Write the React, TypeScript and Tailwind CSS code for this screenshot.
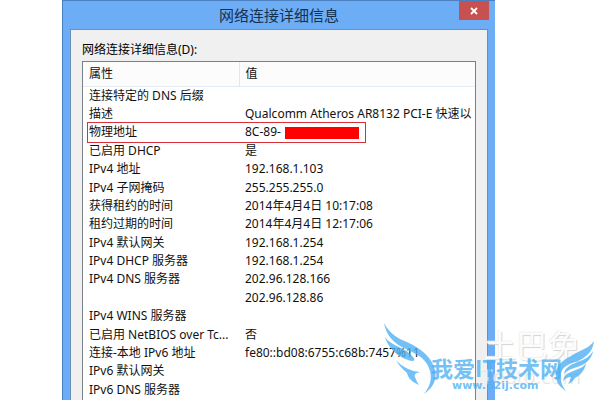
import * as React from "react";

type Detail = {
  name: string;
  value: string;
  masked?: boolean;
};

const details: Detail[] = [
  { name: "连接特定的 DNS 后缀", value: "" },
  { name: "描述", value: "Qualcomm Atheros AR8132 PCI-E 快速以" },
  { name: "物理地址", value: "8C-89-", masked: true },
  { name: "已启用 DHCP", value: "是" },
  { name: "IPv4 地址", value: "192.168.1.103" },
  { name: "IPv4 子网掩码", value: "255.255.255.0" },
  { name: "获得租约的时间", value: "2014年4月4日 10:17:08" },
  { name: "租约过期的时间", value: "2014年4月4日 12:17:06" },
  { name: "IPv4 默认网关", value: "192.168.1.254" },
  { name: "IPv4 DHCP 服务器", value: "192.168.1.254" },
  { name: "IPv4 DNS 服务器", value: "202.96.128.166" },
  { name: "", value: "202.96.128.86" },
  { name: "IPv4 WINS 服务器", value: "" },
  { name: "已启用 NetBIOS over Tc...", value: "否" },
  { name: "连接-本地 IPv6 地址", value: "fe80::bd08:6755:c68b:7457%11" },
  { name: "IPv6 默认网关", value: "" },
  { name: "IPv6 DNS 服务器", value: "" },
];

function TitleBar() {
  return (
    <header className="relative flex h-[29px] items-center justify-center border-t border-[#4a7fc0]">
      <h1 className="text-[15px] leading-5 text-[#16304f]">网络连接详细信息</h1>
      <button
        type="button"
        aria-label="关闭"
        className="absolute top-0 right-1.5 flex h-[19px] w-[30px] items-center justify-center bg-[#c75050]"
      >
        <svg viewBox="0 0 8 8" className="h-2 w-2" aria-hidden="true">
          <path d="M1 1l6 6M7 1L1 7" stroke="#fff" strokeWidth="1.8" />
        </svg>
      </button>
    </header>
  );
}

function DetailsTable() {
  return (
    <table
      aria-labelledby="details-label"
      className="h-[337px] w-full table-fixed border-collapse text-left text-xs leading-[18px] whitespace-nowrap text-[#111]"
    >
      <thead>
        <tr className="h-6 border-b border-[#e3edf3] bg-[#fcfcfd]">
          <th className="w-[156px] border-r border-[#e0e8f0] px-1.5 py-0 font-normal">
            属性
          </th>
          <th className="px-1.5 py-0 font-normal">值</th>
        </tr>
      </thead>
      <tbody>
        {details.map((detail, index) => (
          <tr key={index} className="relative">
            <td className="px-1.5 py-0">{detail.name}</td>
            <td className="py-0 pr-0 pl-1.5">
              {detail.value}
              {detail.masked && (
                <>
                  <span className="ml-1 inline-block h-3 w-[74px] bg-[#fe0000] align-middle" />
                  <span className="absolute -inset-y-px left-1 w-[279px] border border-solid border-[#d9303a]" />
                </>
              )}
            </td>
          </tr>
        ))}
      </tbody>
    </table>
  );
}

function Watermark() {
  return (
    <div className="pointer-events-none absolute right-0 bottom-0 h-20 w-[220px] text-[#4fb0f2]/80">
      <div className="absolute top-1 right-5 font-['Noto_Sans_CJK_SC',sans-serif] text-[32px] leading-10 text-white/90 [text-shadow:1px_1px_1px_#d4d4d4,-1px_-1px_1px_#f0f0f0]">
        土巴兔
      </div>
      <div className="absolute top-11 right-5 font-['Open_Sans',sans-serif] text-xl leading-6 text-white/40 [text-shadow:1px_1px_1px_#e0e0e0]">
        To8to.com
      </div>
      <svg
        viewBox="0 0 220 80"
        className="absolute inset-0"
        fill="currentColor"
        aria-hidden="true"
      >
        <path d="M4 3C8 11 14 16 22 20C32 24 42 29 49 38C58 50 59 64 44 74C52 64 53 54 47 44C42 36 34 33 26 29C14 24 6 15 4 3Z" />
        <path d="M5 17C11 26 22 26 30 34C35 38 36 41 32 41C26 40 10 34 5 17Z" />
        <path d="M16 40C22 47 30 51 40 52C36 53 34 54 35 57C36 60 37 62 39 65C32 62 28 58 27 53C23 49 19 46 16 40Z" />
        <path d="M214 21C213 30 208 36 200 40C190 44 182 46 181 54C180 61 182 66 186 71C178 66 175 60 176 52C177 42 188 38 196 33C204 29 210 27 214 21Z" />
        <path d="M213 31C212 39 205 45 197 47C191 49 188 50 184 54C185 46 193 44 200 41C206 39 210 36 213 31Z" />
        <path d="M206 43C205 51 199 56 195 58C193 61 191 63 188 64C190 61 190 59 191 57C188 57 186 58 183 61C184 53 192 52 198 49C202 48 204 46 206 43Z" />
      </svg>
      <div className="absolute top-[35px] left-[51px] font-['Noto_Sans_CJK_SC',sans-serif] text-[22px] leading-6 font-bold whitespace-nowrap">
        我爱IT技术网
      </div>
      <div className="absolute top-[58px] left-[72px] font-['DejaVu_Sans',sans-serif] text-[11px] leading-4 font-bold">
        www.52ij.com
      </div>
    </div>
  );
}

export default function App() {
  return (
    <main className="relative h-screen overflow-hidden bg-white pr-[105px] pl-[62px] font-['Noto_Sans','Noto_Sans_CJK_SC',sans-serif]">
      <section className="border-l border-[#4a7fc0] bg-[#6dadf6]">
        <TitleBar />
        <div className="mr-[7px] ml-[7px] border border-[#6c8fb8] bg-[#f0f0f0] px-[11px] pt-[10px] pb-10">
          <p id="details-label" className="text-xs leading-5">
            网络连接详细信息(D):
          </p>
          <div className="mt-px overflow-hidden border border-[#7b7f87] bg-white pb-5">
            <DetailsTable />
          </div>
        </div>
      </section>
      <Watermark />
    </main>
  );
}
